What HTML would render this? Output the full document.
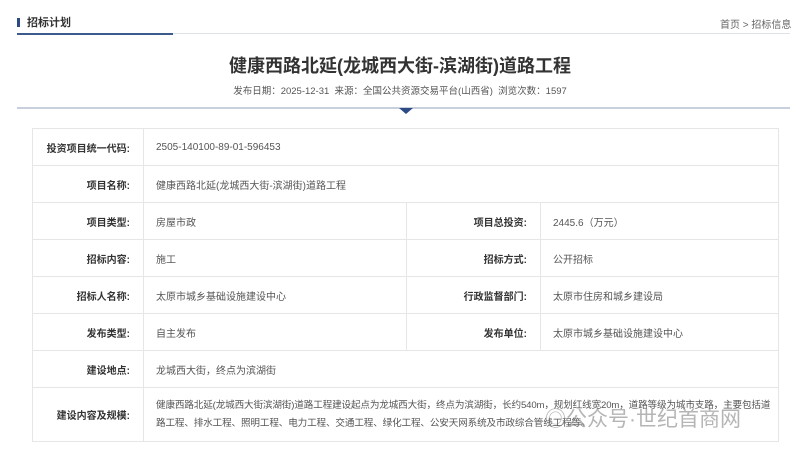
<!DOCTYPE html>
<html><head><meta charset="utf-8"><style>
*{margin:0;padding:0;box-sizing:border-box}
body{width:800px;height:452px;background:#fff;font-family:"Liberation Sans","Noto Sans CJK SC",sans-serif;color:#333;position:relative;overflow:hidden}
.a{position:absolute}
table{position:absolute;left:32px;top:128px;width:747px;border-collapse:collapse;font-size:10px}
td{border:1px solid #e6e6e6;height:37px;padding:0 12px;color:#555}
td.l{text-align:right;font-weight:bold;color:#333;padding-right:13px}
</style></head><body>
<div class="a" style="left:17px;top:18px;width:3px;height:9px;background:#2b4a86"></div>
<div class="a" style="left:27px;top:14px;font-size:11px;font-weight:bold;color:#333">招标计划</div>
<div class="a" style="left:720px;top:16px;font-size:10px;color:#666">首页 &gt; 招标信息</div>
<div class="a" style="left:17px;top:33px;width:773px;height:1px;background:#dde1e8"></div>
<div class="a" style="left:17px;top:33px;width:156px;height:2px;background:#3c5a8c"></div>
<div class="a" style="left:0;width:800px;top:52px;text-align:center;font-size:18px;font-weight:bold;color:#333">健康西路北延(龙城西大街-滨湖街)道路工程</div>
<div class="a" style="left:0;width:800px;top:83px;text-align:center;font-size:9.5px;color:#555">发布日期：2025-12-31&nbsp;&nbsp;来源：全国公共资源交易平台(山西省)&nbsp;&nbsp;浏览次数：1597</div>
<div class="a" style="left:17px;top:107px;width:773px;height:2px;background:#c8d0dd"></div>
<div class="a" style="left:399px;top:108px;width:0;height:0;border-left:7px solid transparent;border-right:7px solid transparent;border-top:6px solid #2b4a86"></div>
<table>
<colgroup><col style="width:111px"><col style="width:263px"><col style="width:134px"><col></colgroup>
<tr><td class="l">投资项目统一代码:</td><td colspan="3">2505-140100-89-01-596453</td></tr>
<tr><td class="l">项目名称:</td><td colspan="3">健康西路北延(龙城西大街-滨湖街)道路工程</td></tr>
<tr><td class="l">项目类型:</td><td>房屋市政</td><td class="l">项目总投资:</td><td>2445.6（万元）</td></tr>
<tr><td class="l">招标内容:</td><td>施工</td><td class="l">招标方式:</td><td>公开招标</td></tr>
<tr><td class="l">招标人名称:</td><td>太原市城乡基础设施建设中心</td><td class="l">行政监督部门:</td><td>太原市住房和城乡建设局</td></tr>
<tr><td class="l">发布类型:</td><td>自主发布</td><td class="l">发布单位:</td><td>太原市城乡基础设施建设中心</td></tr>
<tr><td class="l">建设地点:</td><td colspan="3">龙城西大街，终点为滨湖街</td></tr>
<tr><td class="l" style="height:54px">建设内容及规模:</td><td colspan="3" style="line-height:18px;font-size:9.6px;letter-spacing:-0.15px;padding-right:2px">健康西路北延(龙城西大街滨湖街)道路工程建设起点为龙城西大街，终点为滨湖街，长约540m，规划红线宽20m，道路等级为城市支路，主要包括道路工程、排水工程、照明工程、电力工程、交通工程、绿化工程、公安天网系统及市政综合管线工程等。</td></tr>
</table>
<div class="a" style="left:545px;top:403px;font-size:21px;color:rgba(120,120,120,0.55)">◎公众号·世纪首商网</div>
</body></html>
